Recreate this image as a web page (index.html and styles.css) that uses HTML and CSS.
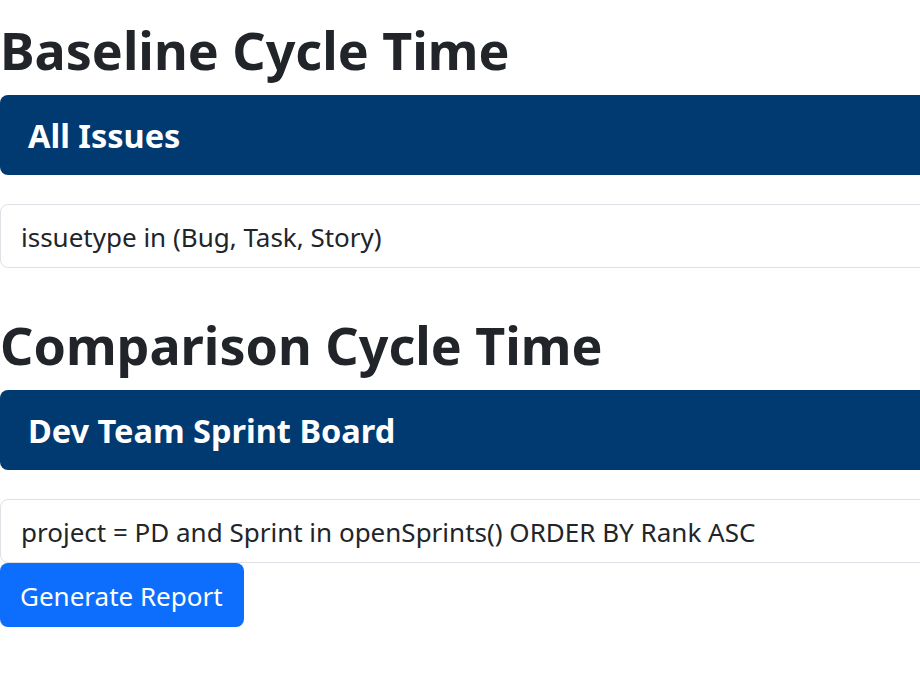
FILE: index.html
```html
<!DOCTYPE html>
<html lang="en">
<head>
<meta charset="utf-8">
<title>Cycle Time</title>
<link rel="stylesheet" href="styles.css">
</head>
<body>
<main class="page">
  <section class="block">
    <h1 class="title">Baseline Cycle Time</h1>
    <div class="band"><h2 class="band-title">All Issues</h2></div>
    <div class="query">issuetype in (Bug, Task, Story)</div>
  </section>
  <section class="block">
    <h1 class="title">Comparison Cycle Time</h1>
    <div class="band"><h2 class="band-title">Dev Team Sprint Board</h2></div>
    <div class="query">project = PD and Sprint in openSprints() ORDER BY Rank ASC</div>
  </section>
  <button class="btn" type="button">Generate Report</button>
</main>
</body>
</html>
```
FILE: styles.css
```css
html, body {
  margin: 0;
  padding: 0;
  background: #ffffff;
}
body {
  font-family: "Noto Sans", "Open Sans", sans-serif;
  color: #212529;
}
.page {
  width: 100%;
  overflow: hidden;
  display: flex;
  flex-direction: column;
  align-items: flex-start;
}
.block {
  width: calc(100% + 20px);
  display: flex;
  flex-direction: column;
  margin-bottom: 27px;
}
.block + .block {
  margin-bottom: 0;
}
.title {
  margin: 0;
  height: 95px;
  line-height: 100px;
  font-size: 52px;
  font-weight: 700;
  color: #212529;
  white-space: nowrap;
}
.band {
  height: 80px;
  box-sizing: border-box;
  background: #003a70;
  border-radius: 8px;
  display: flex;
  align-items: center;
  padding-left: 28px;
  margin-bottom: 29px;
}
.band-title {
  margin: 0;
  font-size: 32.5px;
  font-weight: 700;
  color: #ffffff;
}
.query {
  height: 64px;
  box-sizing: border-box;
  border: 1px solid #dee2e6;
  border-radius: 8px;
  display: flex;
  align-items: center;
  padding-left: 20px;
  padding-top: 2px;
  font-size: 26px;
  color: #212529;
  white-space: nowrap;
}
.btn {
  height: 64px;
  width: 244px;
  border: none;
  border-radius: 8px;
  background: #0d6efd;
  color: #ffffff;
  font-family: inherit;
  font-size: 26px;
  padding: 2px 0 0 20px;
  text-align: left;
}
```
